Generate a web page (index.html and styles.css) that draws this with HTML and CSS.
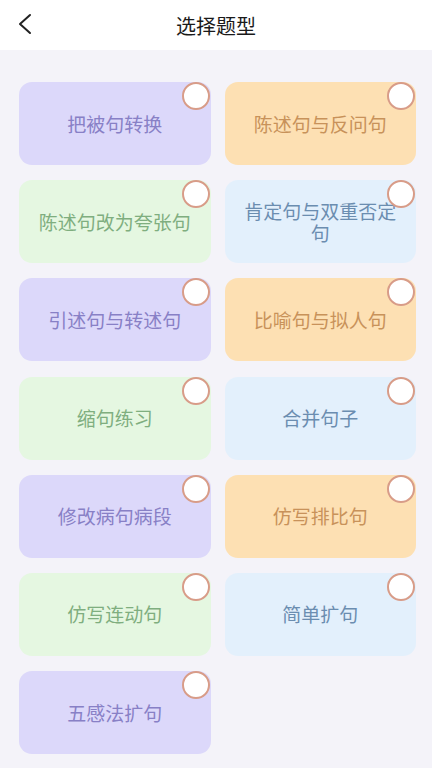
FILE: index.html
```html
<!DOCTYPE html>
<html lang="zh-CN">
<head>
  <meta charset="UTF-8" />
  <title>选择题型</title>
  <link rel="stylesheet" href="styles.css">
</head>
<body>

  <!-- Header -->
  <header class="topbar">
    <a class="back" href="#">
      <svg width="16" height="22" viewBox="0 0 16 22">
        <path d="M13 2 L3 11 L13 20" fill="none" stroke="#222" stroke-width="2" stroke-linecap="round" stroke-linejoin="round" />
      </svg>
    </a>
    <h1>选择题型</h1>
  </header>

  <!-- Type list -->
  <div class="type-grid">
    <div class="card purple"><span>把被句转换</span><i class="check"></i></div>
    <div class="card orange"><span>陈述句与反问句</span><i class="check"></i></div>
    <div class="card green"><span>陈述句改为夸张句</span><i class="check"></i></div>
    <div class="card blue"><span>肯定句与双重否定句</span><i class="check"></i></div>
    <div class="card purple"><span>引述句与转述句</span><i class="check"></i></div>
    <div class="card orange"><span>比喻句与拟人句</span><i class="check"></i></div>
    <div class="card green"><span>缩句练习</span><i class="check"></i></div>
    <div class="card blue"><span>合并句子</span><i class="check"></i></div>
    <div class="card purple"><span>修改病句病段</span><i class="check"></i></div>
    <div class="card orange"><span>仿写排比句</span><i class="check"></i></div>
    <div class="card green"><span>仿写连动句</span><i class="check"></i></div>
    <div class="card blue"><span>简单扩句</span><i class="check"></i></div>
    <div class="card purple"><span>五感法扩句</span><i class="check"></i></div>
  </div>

</body>
</html>
```

FILE: styles.css
```css
* {
  box-sizing: border-box;
}

body {
  margin: 0;
  font-family: "Noto Sans CJK SC", "Noto Sans", sans-serif;
  background-color: #f4f3f9;
  color: #1a1a1a;
}

.topbar {
  position: relative;
  height: 50px;
  background: #fff;
  display: flex;
  align-items: center;
  justify-content: center;
}

.topbar h1 {
  margin: 0;
  font-size: 20px;
  font-weight: normal;
  color: #1a1a1a;
}

.back {
  position: absolute;
  left: 17px;
  top: 13px;
  display: flex;
}

.type-grid {
  display: grid;
  grid-template-columns: 1fr 1fr;
  column-gap: 14px;
  row-gap: 15.2px;
  padding: 32px 16px 20px 19px;
}

.card {
  position: relative;
  height: 83px;
  border-radius: 13px;
  display: flex;
  align-items: center;
  justify-content: center;
  text-align: center;
  padding: 0 16px;
  font-size: 19px;
  line-height: 22px;
}

.check {
  position: absolute;
  top: 0;
  right: 1px;
  width: 28px;
  height: 28px;
  border-radius: 50%;
  background: #fff;
  border: 2px solid #d89c88;
}

.purple {
  background: #dcd8fa;
  color: #8880c6;
}

.orange {
  background: #fde0b3;
  color: #c8925a;
}

.green {
  background: #e5f7e1;
  color: #7fae7f;
}

.blue {
  background: #e3f0fc;
  color: #6b8db0;
}
```
